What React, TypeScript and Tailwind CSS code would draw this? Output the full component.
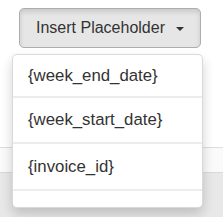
import React from "react";

export default function App() {
  const items = [
    { label: "{week_end_date}", h: "h-[43px]" },
    { label: "{week_start_date}", h: "h-[46px]" },
    { label: "{invoice_id}", h: "h-[47px]" },
  ];
  return (
    <div
      className="relative w-[223px] h-[217px] overflow-hidden bg-white"
      style={{ fontFamily: '"Liberation Sans", Arial, sans-serif' }}
    >
      {/* background page content */}
      <div className="flex flex-col h-full">
        <div className="h-[148px] bg-white border-b border-[#dedede]" />
        <div className="h-[25px] bg-[#fafafa] border-b border-[#d9d9d9]" />
        <div className="flex-1 bg-[#e8e8e8]" />
      </div>

      {/* dropdown button */}
      <div className="absolute left-[19px] top-[8px]">
        <button className="flex items-center w-[182px] h-[40px] pl-[16px] rounded-[5px] border border-[#adadad] bg-[#e6e6e6] text-[16px] text-[#333] shadow-[inset_0_3px_5px_rgba(0,0,0,0.125)]">
          <span>Insert Placeholder</span>
          <span className="ml-[11px] mt-[2px] w-0 h-0 border-l-[4px] border-r-[4px] border-t-[4px] border-l-transparent border-r-transparent border-t-[#333]" />
        </button>
      </div>

      {/* dropdown menu */}
      <div className="absolute left-[12px] top-[54px] w-[191px] h-[154px] rounded-[5px] border border-[rgba(0,0,0,0.15)] bg-white shadow-[0_6px_12px_rgba(0,0,0,0.175)] overflow-hidden">
        {items.map((it) => (
          <div
            key={it.label}
            className={`${it.h} flex items-center pl-[15px] border-b-2 border-[#ececec] text-[16.8px] text-[#333]`}
          >
            {it.label}
          </div>
        ))}
      </div>
    </div>
  );
}
